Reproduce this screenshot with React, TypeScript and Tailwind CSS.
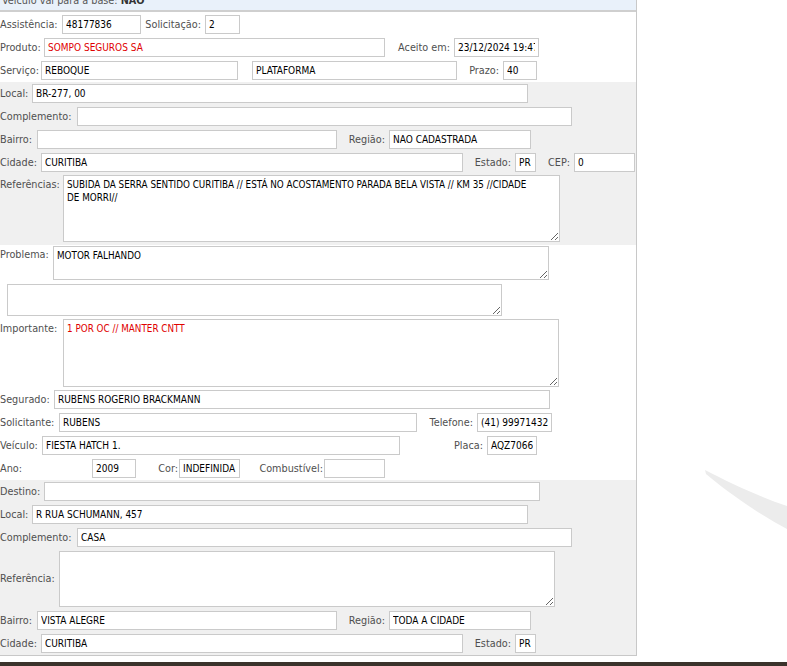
const lab = 'flex shrink-0 items-center whitespace-nowrap pt-[1px] text-[#4f4f4f]';
const labR = 'flex shrink-0 items-center justify-end whitespace-nowrap pr-[4px] pt-[1px] text-[#4f4f4f]';
const inp =
  "h-[19px] shrink-0 border border-[#cacaca] bg-white px-[3px] font-['DejaVu_Sans_Condensed',sans-serif] text-[10px] leading-[17px] outline-none";
const area =
  "shrink-0 border border-[#cacaca] bg-white px-[3px] pt-[3px] font-['DejaVu_Sans_Condensed',sans-serif] text-[9.8px] leading-[12.5px] outline-none";
const blk = 'text-black';
const red = 'text-[#e00000]';

export default function App() {
  return (
    <div className="relative h-[666px] w-[787px] overflow-hidden bg-white font-['DejaVu_Sans',sans-serif] text-[9.7px]">
      {/* faint watermark in the background */}
      <svg className="absolute left-[700px] top-[465px]" width="87" height="70" viewBox="0 0 87 70">
        <path d="M5 5 C30 18 60 32 87 41 L87 64 C55 47 25 25 6 9 Z" fill="#ececec" />
      </svg>

      <div className="relative w-[637px] border-b border-r border-[#c8c8c8]">
        {/* top strip, scrolled */}
        <div className="h-[10px] overflow-hidden bg-[#e9f1fa] pl-[2px]">
          <div className="-mt-[5px] leading-[12px] text-[#555]">
            Veículo vai para a base: <b className="text-[#333]">NÃO</b>
          </div>
        </div>
        <div className="h-[2px] bg-[#cfcfcf]" />

        {/* Atendimento */}
        <div className="mt-[3px] flex h-[19px]">
          <span className={`${lab} w-[62px]`}>Assistência:</span>
          <input readOnly value="48177836" className={`${inp} ${blk} w-[79px]`} />
          <span className={`${labR} w-[64px]`}>Solicitação:</span>
          <input readOnly value="2" className={`${inp} ${blk} w-[35px]`} />
        </div>
        <div className="mt-[4px] flex h-[19px]">
          <span className={`${lab} w-[44px]`}>Produto:</span>
          <input readOnly value="SOMPO SEGUROS SA" className={`${inp} ${red} w-[341px]`} />
          <span className={`${labR} w-[69px]`}>Aceito em:</span>
          <input readOnly value="23/12/2024 19:47" className={`${inp} ${blk} w-[85px]`} />
        </div>
        <div className="mt-[4px] flex h-[19px]">
          <span className={`${lab} w-[41px]`}>Serviço:</span>
          <input readOnly value="REBOQUE" className={`${inp} ${blk} w-[197px]`} />
          <span className="w-[14px] shrink-0" />
          <input readOnly value="PLATAFORMA" className={`${inp} ${blk} w-[205px]`} />
          <span className={`${labR} w-[46px]`}>Prazo:</span>
          <input readOnly value="40" className={`${inp} ${blk} w-[34px]`} />
        </div>

        {/* Origem */}
        <div className="mt-[2px] bg-[#f0f0f0] pb-[3px] pt-[2px]">
          <div className="flex h-[19px]">
            <span className={`${lab} w-[32px]`}>Local:</span>
            <input readOnly value="BR-277, 00" className={`${inp} ${blk} w-[496px]`} />
          </div>
          <div className="mt-[4px] flex h-[19px]">
            <span className={`${lab} w-[77px]`}>Complemento:</span>
            <input readOnly value="" className={`${inp} ${blk} w-[495px]`} />
          </div>
          <div className="mt-[4px] flex h-[19px]">
            <span className={`${lab} w-[37px]`}>Bairro:</span>
            <input readOnly value="" className={`${inp} ${blk} w-[300px]`} />
            <span className={`${labR} w-[52px]`}>Região:</span>
            <input readOnly value="NÃO CADASTRADA" className={`${inp} ${blk} w-[142px]`} />
          </div>
          <div className="mt-[4px] flex h-[19px]">
            <span className={`${lab} w-[41px]`}>Cidade:</span>
            <input readOnly value="CURITIBA" className={`${inp} ${blk} w-[422px]`} />
            <span className={`${labR} w-[52px]`}>Estado:</span>
            <input readOnly value="PR" className={`${inp} ${blk} w-[21px]`} />
            <span className={`${labR} w-[38px]`}>CEP:</span>
            <input readOnly value="0" className={`${inp} ${blk} w-[61px]`} />
          </div>
          <div className="mt-[3px] flex">
            <span className="w-[63px] shrink-0 pt-[3px] text-[#4f4f4f]">Referências:</span>
            <textarea
              readOnly
              value={'SUBIDA DA SERRA SENTIDO CURITIBA // ESTÁ NO ACOSTAMENTO PARADA BELA VISTA // KM 35 //CIDADE\nDE MORRI//'}
              className={`${area} ${blk} h-[67px] w-[497px]`}
            />
          </div>
        </div>

        {/* Problema / Segurado */}
        <div className="mt-[1px] flex">
          <span className="w-[53px] shrink-0 pt-[2px] text-[#4f4f4f]">Problema:</span>
          <textarea readOnly value="MOTOR FALHANDO" className={`${area} ${blk} h-[34px] w-[496px]`} />
        </div>
        <div className="ml-[7px] mt-[4px] flex">
          <textarea readOnly value="" className={`${area} ${blk} h-[32px] w-[495px]`} />
        </div>
        <div className="mt-[3px] flex">
          <span className="w-[63px] shrink-0 pt-[3px] text-[#4f4f4f]">Importante:</span>
          <textarea readOnly value="1 POR OC // MANTER CNTT" className={`${area} ${red} h-[68px] w-[496px]`} />
        </div>
        <div className="mt-[3px] flex h-[19px]">
          <span className={`${lab} w-[54px]`}>Segurado:</span>
          <input readOnly value="RUBENS ROGERIO BRACKMANN" className={`${inp} ${blk} w-[496px]`} />
        </div>
        <div className="mt-[4px] flex h-[19px]">
          <span className={`${lab} w-[59px]`}>Solicitante:</span>
          <input readOnly value="RUBENS" className={`${inp} ${blk} w-[358px]`} />
          <span className={`${labR} w-[60px]`}>Telefone:</span>
          <input readOnly value="(41) 999714321" className={`${inp} ${blk} w-[75px]`} />
        </div>
        <div className="mt-[4px] flex h-[19px]">
          <span className={`${lab} w-[42px]`}>Veículo:</span>
          <input readOnly value="FIESTA HATCH 1." className={`${inp} ${blk} w-[358px]`} />
          <span className={`${labR} w-[87px]`}>Placa:</span>
          <input readOnly value="AQZ7066" className={`${inp} ${blk} w-[50px]`} />
        </div>
        <div className="mt-[4px] flex h-[19px]">
          <span className={`${lab} w-[92px]`}>Ano:</span>
          <input readOnly value="2009" className={`${inp} ${blk} w-[44px]`} />
          <span className="flex w-[43px] shrink-0 items-center justify-end pr-[1px] pt-[1px] text-[#4f4f4f]">Cor:</span>
          <input readOnly value="INDEFINIDA" className={`${inp} ${blk} w-[61px]`} />
          <span className="flex w-[84px] shrink-0 items-center justify-end pr-[1px] pt-[1px] text-[#4f4f4f]">Combustível:</span>
          <input readOnly value="" className={`${inp} ${blk} w-[61px]`} />
        </div>

        {/* Destino */}
        <div className="mt-[2px] bg-[#f0f0f0] pb-[2px] pt-[2px]">
          <div className="flex h-[19px]">
            <span className={`${lab} w-[44px]`}>Destino:</span>
            <input readOnly value="" className={`${inp} ${blk} w-[496px]`} />
          </div>
          <div className="mt-[4px] flex h-[19px]">
            <span className={`${lab} w-[32px]`}>Local:</span>
            <input readOnly value="R RUA SCHUMANN, 457" className={`${inp} ${blk} w-[496px]`} />
          </div>
          <div className="mt-[4px] flex h-[19px]">
            <span className={`${lab} w-[77px]`}>Complemento:</span>
            <input readOnly value="CASA" className={`${inp} ${blk} w-[495px]`} />
          </div>
          <div className="mt-[4px] flex items-center">
            <span className="w-[59px] shrink-0 text-[#4f4f4f]">Referência:</span>
            <textarea readOnly value="" className={`${area} ${blk} h-[56px] w-[496px]`} />
          </div>
          <div className="mt-[4px] flex h-[19px]">
            <span className={`${lab} w-[37px]`}>Bairro:</span>
            <input readOnly value="VISTA ALEGRE" className={`${inp} ${blk} w-[300px]`} />
            <span className={`${labR} w-[52px]`}>Região:</span>
            <input readOnly value="TODA A CIDADE" className={`${inp} ${blk} w-[142px]`} />
          </div>
          <div className="mt-[4px] flex h-[19px]">
            <span className={`${lab} w-[41px]`}>Cidade:</span>
            <input readOnly value="CURITIBA" className={`${inp} ${blk} w-[422px]`} />
            <span className={`${labR} w-[52px]`}>Estado:</span>
            <input readOnly value="PR" className={`${inp} ${blk} w-[21px]`} />
          </div>
        </div>
      </div>

      <div className="mt-[6px] h-[10px] bg-[#3a322b]" />
    </div>
  );
}
